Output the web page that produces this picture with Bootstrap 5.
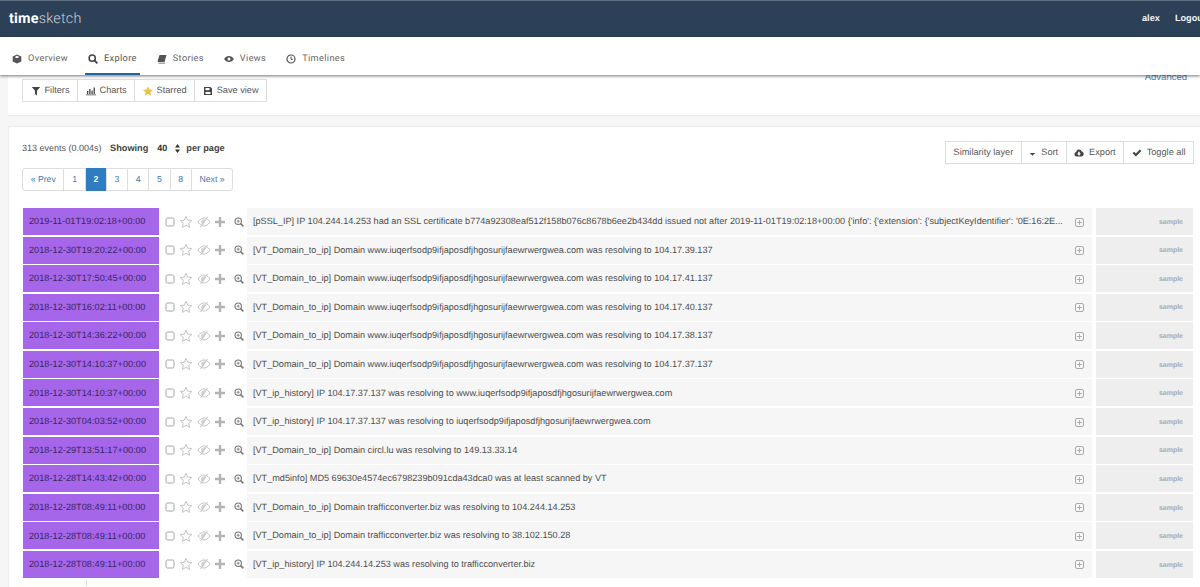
<!DOCTYPE html>
<html lang="en"><head><meta charset="utf-8"><title>timesketch</title>
<link href="https://cdn.jsdelivr.net/npm/bootstrap@5.3.0/dist/css/bootstrap.min.css" rel="stylesheet">
<style>
html,body{height:587px;overflow:hidden}
body{background:#fff;font-family:"Liberation Sans",Arial,sans-serif;font-size:10.5px;color:#555;text-rendering:geometricPrecision}
.ts-top{height:37px;background:#2c4058;border-top:1px solid #5d6f80;color:#fff;padding:0 0 0 9px}
.ts-logo{font-family:Roboto,sans-serif;font-size:14.4px;color:#c9d1d9;letter-spacing:.2px;font-weight:300}
.ts-logo b{color:#fff;font-weight:700}
.ts-user{font-size:9.2px;font-weight:700;gap:15px;margin-right:-6px;margin-top:-1px;white-space:nowrap;color:#f2f4f6}
.ts-nav{height:38px;background:#fff;box-shadow:0 1px 3px rgba(0,0,0,.55);position:relative;z-index:3;padding-left:9px;gap:14px;font-family:Roboto,sans-serif;font-size:9.2px;letter-spacing:.35px;color:#666}
.ts-tab{height:100%;padding:7px 3px 0;gap:6px;white-space:nowrap;border-bottom:2px solid transparent}
.ts-tab.on{border-bottom-color:#23659f;color:#555}
.ts-tab svg{width:10px;height:10px;fill:#555}
.ts-body{background:#f6f6f6;padding-left:8px;height:512px;overflow:hidden}
.ts-toolwrap{background:#fff;height:40px;padding-left:14px;position:relative}
.ts-adv{position:absolute;right:13px;top:-4px;color:#4a7fb5;font-size:9.5px}
.ts-group{display:inline-flex;margin-top:4px;border:1px solid #ddd;height:23px;background:#fff}
.ts-gb{display:flex;align-items:center;gap:4px;padding:1px 7.5px 0;border-right:1px solid #ddd;white-space:nowrap;font-size:9.2px;color:#555}
.ts-gb:last-child{border-right:0}
.ts-gb svg{width:10px;height:10px;fill:#444}
.ts-band{height:12px;background:#f6f6f6;border-top:1px solid #ececec;border-bottom:1px solid #e9e9e9}
.ts-panel{background:#fff;height:460px;padding:0 7px 0 13px;border-left:1px solid #eee}
.ts-stats{height:41px;padding-top:15px;font-size:9px;color:#555;white-space:nowrap}
.ts-stats b{color:#444;font-size:9.2px}
.ts-showing{margin-left:6px}
.ts-sel{display:inline-flex;align-items:center;gap:8px;margin:0 6px 0 9px;font-weight:700;color:#333}
.ts-actions{position:absolute;right:-1px;top:14px;margin:0}
.ts-actions .ts-gb{gap:5px;padding-top:1px}
.ts-pager{display:inline-flex;border:1px solid #ddd;border-radius:3px;height:23px;font-size:8.7px;color:#3f7ab3}
.ts-pager span{display:flex;align-items:center;padding:0 7.7px;border-right:1px solid #ddd}
.ts-pager span:last-child{border:0}
.ts-pager .ts-cur{background:#2f7cc0;color:#fff;font-weight:700;margin:-1px 0}
.ts-rows{margin-top:17px;margin-left:1px}
.ts-row{display:flex;height:27px;margin-bottom:1.58px;align-items:stretch}
.ts-time{width:136px;flex:none;background:#a566ea;color:#3a2560;display:flex;align-items:center;padding:1px 0 0 6px;font-size:9.1px;letter-spacing:.06px;white-space:nowrap}
.ts-ic{width:88px;flex:none;display:flex;align-items:center;padding-left:6px}
.ts-ic svg{flex:none}
.ts-msg{width:845px;flex:none;background:#f6f6f6;display:flex;align-items:center;padding:1px 8px 0 6px;font-size:9.15px;color:#4d4d4d;white-space:nowrap}
.ts-msg span{flex:1;overflow:hidden}
.ts-src{width:97px;flex:none;margin-left:4px;background:#eee;color:#aaa;font-size:7px;font-weight:700;display:flex;align-items:center;justify-content:flex-end;padding:3px 10px 0 0}
.ts-stub{height:6px;width:1px;background:#ddd;margin-left:64px}
</style></head><body>
<svg width="0" height="0" class="position-absolute">
<defs>
<symbol id="ck" viewBox="0 0 10 10"><rect x="1" y="1" width="8" height="8" rx="1.6" fill="none" stroke="#a4a4a4" stroke-width="1"/></symbol>
<symbol id="st" viewBox="0 0 14 14"><path d="M7 1.3 8.7 5.1l4.1.4-3.1 2.8.9 4.1L7 10.3l-3.6 2.1.9-4.1L1.2 5.500l4.1-.4z" fill="none" stroke="#c4c4c4" stroke-width="1"/></symbol>
<symbol id="ey" viewBox="0 0 14 12"><path d="M1 6c2-3 4-4 6-4s4 1 6 4c-2 3-4 4-6 4S3 9 1 6z" fill="none" stroke="#c4c4c4" stroke-width="1"/><path d="M4 6a3 3 0 0 1 5-2L6 9a3 3 0 0 1-2-3z" fill="#d4d4d4"/><path d="M3.500 11 10.500 1" stroke="#c4c4c4" stroke-width="1"/></symbol>
<symbol id="pl" viewBox="0 0 10 10"><path d="M3.800 0h2.400v3.800H10v2.400H6.200V10H3.800V6.200H0V3.800h3.800z" fill="#b4b4b4"/></symbol>
<symbol id="zm" viewBox="0 0 10 10"><circle cx="4.200" cy="4.200" r="3.200" fill="none" stroke="#777" stroke-width="1.100"/><path d="M6.600 6.600 9.400 9.400" stroke="#777" stroke-width="1.500"/><path d="M2.600 4.200h3.200M4.200 2.600v3.200" stroke="#777" stroke-width=".8"/></symbol>
<symbol id="ex" viewBox="0 0 9 9"><rect x=".5" y=".5" width="8" height="8" rx="1.500" fill="none" stroke="#aaa"/><path d="M2.200 4.500h4.600M4.500 2.200v4.600" stroke="#aaa"/></symbol>
</defs></svg>

<header class="ts-top d-flex align-items-center justify-content-between">
<div class="ts-logo"><b>time</b>sketch</div>
<div class="ts-user d-flex"><span>alex</span><span>Logout</span></div>
</header>

<nav class="ts-nav d-flex">
<div class="ts-tab d-flex align-items-center"><svg viewBox="0 0 10 10"><path d="M5 .5 9.300 2.600v4.800L5 9.500.7 7.400V2.600zM5 1.800 2.600 3 5 4.200 7.400 3z"/></svg>Overview</div>
<div class="ts-tab on d-flex align-items-center"><svg viewBox="0 0 10 10"><circle cx="4.200" cy="4.200" r="3.100" fill="none" stroke="#444" stroke-width="1.500"/><path d="M6.500 6.500 9.400 9.400" stroke="#444" stroke-width="1.800"/></svg>Explore</div>
<div class="ts-tab d-flex align-items-center"><svg viewBox="0 0 10 10"><path d="M2.500 1h7L7.500 8H1.300C.6 8 .6 7 .8 6.200zM1.500 8.800H8V9.500H1.500z"/></svg>Stories</div>
<div class="ts-tab d-flex align-items-center"><svg viewBox="0 0 10 10"><path d="M0 5c1.400-2 3-3 5-3s3.600 1 5 3c-1.400 2-3 3-5 3S1.400 7 0 5z"/><circle cx="5" cy="5" r="1.500" fill="#fff"/></svg>Views</div>
<div class="ts-tab d-flex align-items-center"><svg viewBox="0 0 10 10"><circle cx="5" cy="5" r="4" fill="none" stroke="#555" stroke-width="1.200"/><path d="M5 2.500V5.300H7" fill="none" stroke="#555"/></svg>Timelines</div>
</nav>

<main class="ts-body">
<div class="ts-toolwrap">
<a class="ts-adv text-decoration-none">Advanced</a>
<div class="ts-group">
<div class="ts-gb"><svg viewBox="0 0 10 10"><path d="M.8 1h8.400L6 4.800V9.500L4 8V4.800z"/></svg>Filters</div>
<div class="ts-gb"><svg viewBox="0 0 10 10"><path d="M0 8.500h10v.8H0zM1 5h1.300v3H1zM3.200 3h1.300v5H3.200zM5.400 4.500h1.300V8H5.400zM7.600 1.500h1.300V8H7.600z"/></svg>Charts</div>
<div class="ts-gb"><svg viewBox="0 0 10 10" style="fill:#e8c54a"><path d="M5 .3 6.500 3.500 10 4 7.400 6.300 8.100 9.800 5 8 1.900 9.800 2.600 6.300 0 4 3.500 3.500z"/></svg>Starred</div>
<div class="ts-gb"><svg viewBox="0 0 10 10"><path d="M1 1h6.500L9 2.500V9H1zM2.500 2v2.300h4V2zM2.500 6v2h5V6z" fill-rule="evenodd"/></svg>Save view</div>
</div>
</div>
<div class="ts-band"></div>
<section class="ts-panel">
<div class="ts-stats position-relative">313 events (0.004s) <b class="ts-showing">Showing</b><span class="ts-sel">40 <svg width="5" height="9" viewBox="0 0 5 9"><path d="M2.500 0 5 3.500H0zM2.500 9 0 5.500h5z" fill="#333"/></svg></span><b>per page</b>
<div class="ts-group ts-actions">
<div class="ts-gb">Similarity layer</div>
<div class="ts-gb"><svg viewBox="0 0 10 10" style="width:7px"><path d="M1 5h8L5 9z"/></svg>Sort</div>
<div class="ts-gb"><svg viewBox="0 0 10 10"><path d="M2.500 8.500a2.300 2.300 0 0 1-.4-4.500 3 3 0 0 1 5.700-.6A2.600 2.600 0 0 1 7.500 8.500zM5 7.800 7 5.500H5.800V3.800H4.200V5.500H3z" fill-rule="evenodd"/></svg>Export</div>
<div class="ts-gb"><svg viewBox="0 0 10 10"><path d="M.6 5.300 2.100 3.800 3.900 5.600 7.900 1.600 9.400 3.100 3.900 8.600z"/></svg>Toggle all</div>
</div>
</div>
<div class="ts-pager"><span>« Prev</span><span>1</span><span class="ts-cur">2</span><span>3</span><span>4</span><span>5</span><span>8</span><span>Next »</span></div>
<div class="ts-rows">
<div class="ts-row"><div class="ts-time">2019-11-01T19:02:18+00:00</div><div class="ts-ic"><svg width="10" height="10"><use href="#ck"/></svg><svg width="14" height="14" class="ms-1"><use href="#st"/></svg><svg width="14" height="12" class="ms-1"><use href="#ey"/></svg><svg width="10" height="10" class="ms-1"><use href="#pl"/></svg><svg width="10" height="10" style="margin-left:9px"><use href="#zm"/></svg></div><div class="ts-msg"><span>[pSSL_IP] IP 104.244.14.253 had an SSL certificate b774a92308eaf512f158b076c8678b6ee2b434dd issued not after 2019-11-01T19:02:18+00:00 {'info': {'extension': {'subjectKeyIdentifier': '0E:16:2E...</span><svg width="9" height="9"><use href="#ex"/></svg></div><div class="ts-src">sample</div></div>
<div class="ts-row"><div class="ts-time">2018-12-30T19:20:22+00:00</div><div class="ts-ic"><svg width="10" height="10"><use href="#ck"/></svg><svg width="14" height="14" class="ms-1"><use href="#st"/></svg><svg width="14" height="12" class="ms-1"><use href="#ey"/></svg><svg width="10" height="10" class="ms-1"><use href="#pl"/></svg><svg width="10" height="10" style="margin-left:9px"><use href="#zm"/></svg></div><div class="ts-msg"><span>[VT_Domain_to_ip] Domain www.iuqerfsodp9ifjaposdfjhgosurijfaewrwergwea.com was resolving to 104.17.39.137</span><svg width="9" height="9"><use href="#ex"/></svg></div><div class="ts-src">sample</div></div>
<div class="ts-row"><div class="ts-time">2018-12-30T17:50:45+00:00</div><div class="ts-ic"><svg width="10" height="10"><use href="#ck"/></svg><svg width="14" height="14" class="ms-1"><use href="#st"/></svg><svg width="14" height="12" class="ms-1"><use href="#ey"/></svg><svg width="10" height="10" class="ms-1"><use href="#pl"/></svg><svg width="10" height="10" style="margin-left:9px"><use href="#zm"/></svg></div><div class="ts-msg"><span>[VT_Domain_to_ip] Domain www.iuqerfsodp9ifjaposdfjhgosurijfaewrwergwea.com was resolving to 104.17.41.137</span><svg width="9" height="9"><use href="#ex"/></svg></div><div class="ts-src">sample</div></div>
<div class="ts-row"><div class="ts-time">2018-12-30T16:02:11+00:00</div><div class="ts-ic"><svg width="10" height="10"><use href="#ck"/></svg><svg width="14" height="14" class="ms-1"><use href="#st"/></svg><svg width="14" height="12" class="ms-1"><use href="#ey"/></svg><svg width="10" height="10" class="ms-1"><use href="#pl"/></svg><svg width="10" height="10" style="margin-left:9px"><use href="#zm"/></svg></div><div class="ts-msg"><span>[VT_Domain_to_ip] Domain www.iuqerfsodp9ifjaposdfjhgosurijfaewrwergwea.com was resolving to 104.17.40.137</span><svg width="9" height="9"><use href="#ex"/></svg></div><div class="ts-src">sample</div></div>
<div class="ts-row"><div class="ts-time">2018-12-30T14:36:22+00:00</div><div class="ts-ic"><svg width="10" height="10"><use href="#ck"/></svg><svg width="14" height="14" class="ms-1"><use href="#st"/></svg><svg width="14" height="12" class="ms-1"><use href="#ey"/></svg><svg width="10" height="10" class="ms-1"><use href="#pl"/></svg><svg width="10" height="10" style="margin-left:9px"><use href="#zm"/></svg></div><div class="ts-msg"><span>[VT_Domain_to_ip] Domain www.iuqerfsodp9ifjaposdfjhgosurijfaewrwergwea.com was resolving to 104.17.38.137</span><svg width="9" height="9"><use href="#ex"/></svg></div><div class="ts-src">sample</div></div>
<div class="ts-row"><div class="ts-time">2018-12-30T14:10:37+00:00</div><div class="ts-ic"><svg width="10" height="10"><use href="#ck"/></svg><svg width="14" height="14" class="ms-1"><use href="#st"/></svg><svg width="14" height="12" class="ms-1"><use href="#ey"/></svg><svg width="10" height="10" class="ms-1"><use href="#pl"/></svg><svg width="10" height="10" style="margin-left:9px"><use href="#zm"/></svg></div><div class="ts-msg"><span>[VT_Domain_to_ip] Domain www.iuqerfsodp9ifjaposdfjhgosurijfaewrwergwea.com was resolving to 104.17.37.137</span><svg width="9" height="9"><use href="#ex"/></svg></div><div class="ts-src">sample</div></div>
<div class="ts-row"><div class="ts-time">2018-12-30T14:10:37+00:00</div><div class="ts-ic"><svg width="10" height="10"><use href="#ck"/></svg><svg width="14" height="14" class="ms-1"><use href="#st"/></svg><svg width="14" height="12" class="ms-1"><use href="#ey"/></svg><svg width="10" height="10" class="ms-1"><use href="#pl"/></svg><svg width="10" height="10" style="margin-left:9px"><use href="#zm"/></svg></div><div class="ts-msg"><span>[VT_ip_history] IP 104.17.37.137 was resolving to www.iuqerfsodp9ifjaposdfjhgosurijfaewrwergwea.com</span><svg width="9" height="9"><use href="#ex"/></svg></div><div class="ts-src">sample</div></div>
<div class="ts-row"><div class="ts-time">2018-12-30T04:03:52+00:00</div><div class="ts-ic"><svg width="10" height="10"><use href="#ck"/></svg><svg width="14" height="14" class="ms-1"><use href="#st"/></svg><svg width="14" height="12" class="ms-1"><use href="#ey"/></svg><svg width="10" height="10" class="ms-1"><use href="#pl"/></svg><svg width="10" height="10" style="margin-left:9px"><use href="#zm"/></svg></div><div class="ts-msg"><span>[VT_ip_history] IP 104.17.37.137 was resolving to iuqerfsodp9ifjaposdfjhgosurijfaewrwergwea.com</span><svg width="9" height="9"><use href="#ex"/></svg></div><div class="ts-src">sample</div></div>
<div class="ts-row"><div class="ts-time">2018-12-29T13:51:17+00:00</div><div class="ts-ic"><svg width="10" height="10"><use href="#ck"/></svg><svg width="14" height="14" class="ms-1"><use href="#st"/></svg><svg width="14" height="12" class="ms-1"><use href="#ey"/></svg><svg width="10" height="10" class="ms-1"><use href="#pl"/></svg><svg width="10" height="10" style="margin-left:9px"><use href="#zm"/></svg></div><div class="ts-msg"><span>[VT_Domain_to_ip] Domain circl.lu was resolving to 149.13.33.14</span><svg width="9" height="9"><use href="#ex"/></svg></div><div class="ts-src">sample</div></div>
<div class="ts-row"><div class="ts-time">2018-12-28T14:43:42+00:00</div><div class="ts-ic"><svg width="10" height="10"><use href="#ck"/></svg><svg width="14" height="14" class="ms-1"><use href="#st"/></svg><svg width="14" height="12" class="ms-1"><use href="#ey"/></svg><svg width="10" height="10" class="ms-1"><use href="#pl"/></svg><svg width="10" height="10" style="margin-left:9px"><use href="#zm"/></svg></div><div class="ts-msg"><span>[VT_md5info] MD5 69630e4574ec6798239b091cda43dca0 was at least scanned by VT</span><svg width="9" height="9"><use href="#ex"/></svg></div><div class="ts-src">sample</div></div>
<div class="ts-row"><div class="ts-time">2018-12-28T08:49:11+00:00</div><div class="ts-ic"><svg width="10" height="10"><use href="#ck"/></svg><svg width="14" height="14" class="ms-1"><use href="#st"/></svg><svg width="14" height="12" class="ms-1"><use href="#ey"/></svg><svg width="10" height="10" class="ms-1"><use href="#pl"/></svg><svg width="10" height="10" style="margin-left:9px"><use href="#zm"/></svg></div><div class="ts-msg"><span>[VT_Domain_to_ip] Domain trafficconverter.biz was resolving to 104.244.14.253</span><svg width="9" height="9"><use href="#ex"/></svg></div><div class="ts-src">sample</div></div>
<div class="ts-row"><div class="ts-time">2018-12-28T08:49:11+00:00</div><div class="ts-ic"><svg width="10" height="10"><use href="#ck"/></svg><svg width="14" height="14" class="ms-1"><use href="#st"/></svg><svg width="14" height="12" class="ms-1"><use href="#ey"/></svg><svg width="10" height="10" class="ms-1"><use href="#pl"/></svg><svg width="10" height="10" style="margin-left:9px"><use href="#zm"/></svg></div><div class="ts-msg"><span>[VT_Domain_to_ip] Domain trafficconverter.biz was resolving to 38.102.150.28</span><svg width="9" height="9"><use href="#ex"/></svg></div><div class="ts-src">sample</div></div>
<div class="ts-row"><div class="ts-time">2018-12-28T08:49:11+00:00</div><div class="ts-ic"><svg width="10" height="10"><use href="#ck"/></svg><svg width="14" height="14" class="ms-1"><use href="#st"/></svg><svg width="14" height="12" class="ms-1"><use href="#ey"/></svg><svg width="10" height="10" class="ms-1"><use href="#pl"/></svg><svg width="10" height="10" style="margin-left:9px"><use href="#zm"/></svg></div><div class="ts-msg"><span>[VT_ip_history] IP 104.244.14.253 was resolving to trafficconverter.biz</span><svg width="9" height="9"><use href="#ex"/></svg></div><div class="ts-src">sample</div></div>
</div>
<div class="ts-stub"></div>
</section>
</main>
</body></html>
